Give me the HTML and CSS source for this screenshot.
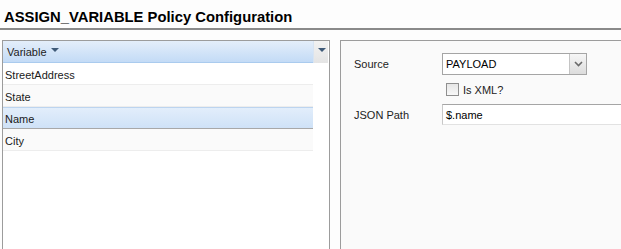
FILE: index.html
```html
<!DOCTYPE html>
<html lang="en">
<head>
<meta charset="UTF-8">
<title>ASSIGN_VARIABLE Policy Configuration</title>
<link rel="stylesheet" href="styles.css">
</head>
<body>

<div class="title">ASSIGN_VARIABLE Policy Configuration</div>

<div class="panels">
    <div class="grid-panel">
        <div class="grid-header">
            <div class="header-cell">Variable <span class="sort-arrow"></span></div>
            <div class="header-trigger"><span class="sort-arrow"></span></div>
        </div>
        <div class="grid-row">StreetAddress</div>
        <div class="grid-row alt">State</div>
        <div class="grid-row selected">Name</div>
        <div class="grid-row alt">City</div>
    </div>

    <div class="form-panel">
        <div class="form-row">
            <label class="form-label">Source</label>
            <div class="combo">
                <div class="combo-value">PAYLOAD</div>
                <div class="combo-trigger">
                    <svg width="9" height="6" viewBox="0 0 9 6"><path d="M1 1 L4.5 4.5 L8 1" fill="none" stroke="#6a6a6a" stroke-width="1.6"/></svg>
                </div>
            </div>
        </div>
        <div class="check-row">
            <span class="checkbox"></span>
            <span>Is XML?</span>
        </div>
        <div class="form-row">
            <label class="form-label">JSON Path</label>
            <div class="text-field">$.name</div>
        </div>
    </div>
</div>

</body>
</html>
```

FILE: styles.css
```css
body {
    margin: 0;
    font-family: "Liberation Sans", Arial, sans-serif;
    font-size: 11px;
    color: #111;
    background-color: #fdfdfd;
    overflow: hidden;
}
.title {
    height: 28px;
    padding-left: 4px;
    font-size: 14.8px;
    font-weight: bold;
    line-height: 34px;
    color: #000;
    border-bottom: 2px solid #8a8a8a;
}
.panels {
    display: flex;
    margin-top: 10px;
    padding-left: 2px;
    height: 220px;
}
.grid-panel {
    width: 326px;
    border: 1px solid #9c9c9c;
    border-bottom: none;
    background-color: #fff;
}
.grid-header {
    display: flex;
    height: 22px;
}
.header-cell {
    width: 306px;
    padding-left: 4px;
    padding-top: 1px;
    line-height: 20px;
    color: #222;
    background: linear-gradient(#e4eefa, #c3dbf6);
    border-bottom: 1px solid #aacbee;
}
.header-trigger {
    width: 15px;
    border-left: 1px solid #d8e4f2;
    background: linear-gradient(#f2f2f2, #e4e4e4);
    display: flex;
    justify-content: center;
    padding-top: 7px;
    box-sizing: border-box;
}
.sort-arrow {
    display: inline-block;
    width: 0;
    height: 0;
    border-left: 4px solid transparent;
    border-right: 4px solid transparent;
    border-top: 4px solid #3f5a78;
    vertical-align: 4px;
    margin-left: 1px;
}
.grid-row {
    width: 310px;
    height: 22px;
    box-sizing: border-box;
    padding: 4px 0 0 2px;
    line-height: 16px;
    color: #1a1a1a;
    border-bottom: 1px solid #ededed;
}
.grid-row.alt {
    background-color: #fafafa;
}
.grid-row.selected {
    background: linear-gradient(#e3eefb, #cfe2f7);
    box-shadow: inset 0 1px #bcd4ef;
    border-bottom-color: #a8a8a8;
}
.form-panel {
    flex: 1;
    margin-left: 10px;
    border-top: 1px solid #9c9c9c;
    border-left: 1px solid #9c9c9c;
    background-color: #fafafa;
    padding-top: 12px;
    padding-left: 13px;
}
.form-row {
    display: flex;
    align-items: center;
    height: 21px;
}
.form-label {
    width: 88px;
    color: #222;
    padding-top: 1px;
}
.combo {
    display: flex;
    width: 145px;
    height: 22px;
    box-sizing: border-box;
    border: 1px solid #a5a5a5;
    background-color: #fff;
}
.combo-value {
    flex: 1;
    padding-left: 3px;
    line-height: 21px;
    color: #000;
}
.combo-trigger {
    width: 16px;
    border-left: 1px solid #c4c4c4;
    background: linear-gradient(#f6f6f6, #dcdcdc);
    display: flex;
    align-items: center;
    justify-content: center;
}
.check-row {
    display: flex;
    align-items: center;
    height: 13px;
    margin: 9px 0 8px 92px;
    color: #222;
}
.checkbox {
    width: 11px;
    height: 11px;
    border: 1px solid #8f8f8f;
    background: linear-gradient(#e6e6e6, #f8f8f8);
    margin-right: 4px;
}
.text-field {
    flex: 1;
    height: 21px;
    box-sizing: border-box;
    border-top: 1px solid #a5a5a5;
    border-left: 1px solid #c8c8c8;
    border-bottom: 1px solid #e2e2e2;
    background-color: #fff;
    padding-left: 3px;
    line-height: 20px;
    color: #000;
}
```
